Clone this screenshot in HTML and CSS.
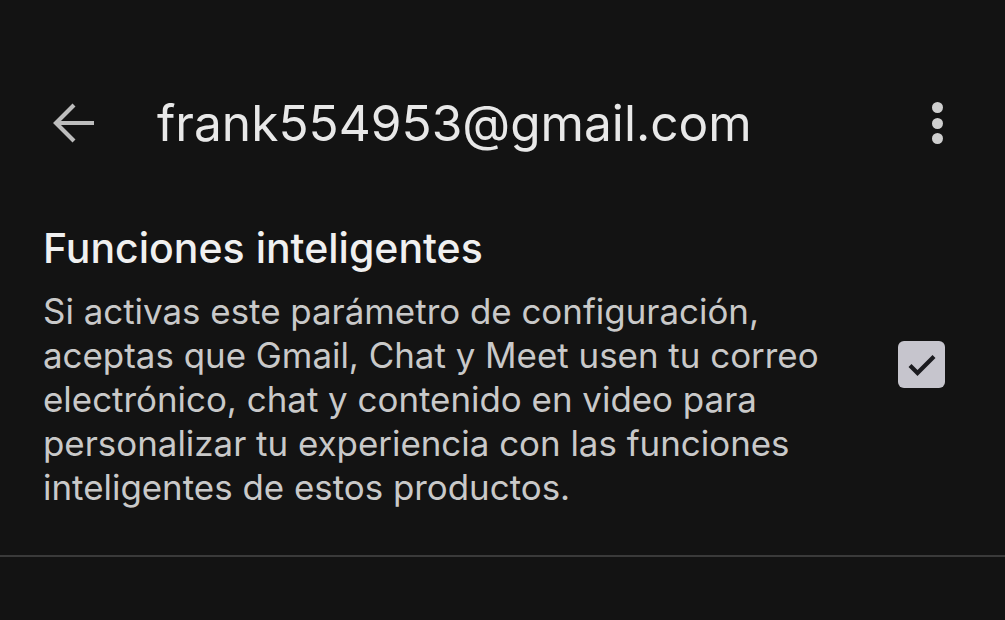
FILE: index.html
```html
<!DOCTYPE html>
<html>
<head>
<meta charset="utf-8">
<link rel="stylesheet" href="styles.css">
</head>
<body>
<div class="screen">
  <header class="topbar">
    <div class="back">
      <svg width="44" height="42" viewBox="0 0 44 42"><path d="M42 21H4M22 3L4 21l18 18" fill="none" stroke="#bdbdbd" stroke-width="4.2" stroke-linecap="butt" stroke-linejoin="miter"/></svg>
    </div>
    <h1 class="title">frank554953@gmail.com</h1>
    <div class="more">
      <span class="dot"></span><span class="dot"></span><span class="dot"></span>
    </div>
  </header>
  <section class="setting">
    <div class="setting-text">
      <h2 class="setting-title">Funciones inteligentes</h2>
      <p class="setting-desc">Si activas este parámetro de configuración,<br>aceptas que Gmail, Chat y Meet usen tu correo<br>electrónico, chat y contenido en video para<br>personalizar tu experiencia con las funciones<br>inteligentes de estos productos.</p>
    </div>
    <div class="checkbox">
      <svg width="30" height="24" viewBox="0 0 30 24"><path d="M3 12.5l7.5 7.5L27 3.5" fill="none" stroke="#1b1b1f" stroke-width="4.2"/></svg>
    </div>
  </section>
  <div class="divider"></div>
</div>
</body>
</html>
```
FILE: styles.css
```css
html, body {
  margin: 0;
  padding: 0;
  background: #131313;
}
.screen {
  width: 1005px;
  height: 620px;
  background: #131313;
  font-family: Inter, Roboto, "Noto Sans", sans-serif;
  overflow: hidden;
}
.topbar {
  display: flex;
  align-items: center;
  height: 56px;
  margin-top: 95px;
  padding-left: 52px;
  padding-right: 62px;
}
.back {
  width: 44px;
  height: 42px;
  display: flex;
}
.title {
  margin: 0 0 0 61px;
  font-size: 49.6px;
  font-weight: 400;
  color: #e8e8e8;
  flex: 1;
  line-height: 56px;
}
.more {
  display: flex;
  flex-direction: column;
  gap: 4.5px;
  align-items: center;
}
.dot {
  width: 11px;
  height: 11px;
  border-radius: 50%;
  background: #cfcfcf;
}
.setting {
  display: flex;
  align-items: flex-start;
  padding: 73px 60px 0 43px;
}
.setting-text {
  flex: 1;
}
.setting-title {
  margin: 0;
  font-size: 41px;
  font-weight: 500;
  color: #f0f0f0;
  line-height: 48px;
}
.setting-desc {
  margin: 17px 0 0;
  font-size: 34.9px;
  line-height: 44px;
  color: #c9c9c9;
}
.checkbox {
  margin-top: 117px;
  width: 47px;
  height: 47px;
  border-radius: 6px;
  background: #c6c5cd;
  display: flex;
  align-items: center;
  justify-content: center;
}
.divider {
  margin-top: 46px;
  height: 2px;
  background: #3a3a3a;
}
```
